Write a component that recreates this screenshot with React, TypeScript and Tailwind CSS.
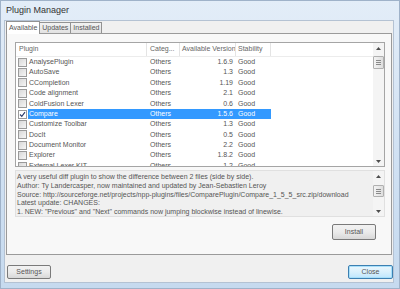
import React from "react";

const plugins: [string, string, string, string][] = [
  ["AnalysePlugin", "Others", "1.6.9", "Good"],
  ["AutoSave", "Others", "1.3", "Good"],
  ["CCompletion", "Others", "1.19", "Good"],
  ["Code alignment", "Others", "2.1", "Good"],
  ["ColdFusion Lexer", "Others", "0.6", "Good"],
  ["Compare", "Others", "1.5.6", "Good"],
  ["Customize Toolbar", "Others", "1.3", "Good"],
  ["DocIt", "Others", "0.5", "Good"],
  ["Document Monitor", "Others", "2.2", "Good"],
  ["Explorer", "Others", "1.8.2", "Good"],
  ["External Lexer KIT", "Others", "1.2", "Good"],
];

function Checkbox({ checked }: { checked?: boolean }) {
  return (
    <div
      className={
        "w-[9px] h-[9px] border border-[#9a9a9a] flex items-center justify-center " +
        (checked ? "bg-white" : "bg-gradient-to-br from-[#d8d8d8] to-[#f6f6f6]")
      }
    >
      {checked && (
        <svg width="7" height="7" viewBox="0 0 7 7">
          <path d="M1 3.5 L2.8 5.3 L6 1.2" stroke="#2a3a6a" strokeWidth="1.1" fill="none" />
        </svg>
      )}
    </div>
  );
}

function ScrollBar({ thumbTop, thumbH }: { thumbTop: number; thumbH: number }) {
  return (
    <div className="w-[11px] h-full relative bg-[#f4f4f4] flex flex-col items-center">
      <div className="h-[10px] flex items-center justify-center">
        <svg width="5" height="3" viewBox="0 0 5 3">
          <path d="M0 3 L2.5 0 L5 3 Z" fill="#4d4d4d" />
        </svg>
      </div>
      <div
        className="absolute left-0 w-[11px] border border-[#b0b0b0] rounded-[1px] bg-gradient-to-r from-[#f3f3f3] to-[#dedede] flex flex-col items-center justify-center gap-[1px]"
        style={{ top: thumbTop, height: thumbH }}
      >
        <div className="w-[5px] h-[1px] bg-[#8a8a8a]" />
        <div className="w-[5px] h-[1px] bg-[#8a8a8a]" />
        <div className="w-[5px] h-[1px] bg-[#8a8a8a]" />
      </div>
      <div className="flex-1" />
      <div className="h-[10px] flex items-center justify-center">
        <svg width="5" height="3" viewBox="0 0 5 3">
          <path d="M0 0 L2.5 3 L5 0 Z" fill="#4d4d4d" />
        </svg>
      </div>
    </div>
  );
}

export default function App() {
  const font = { fontFamily: '"Liberation Sans", Arial, sans-serif' };
  return (
    <div
      className="w-[400px] h-[289px] overflow-hidden relative bg-gradient-to-b from-[#e3edf8] via-[#d2e2f3] to-[#c6daef] border border-[#9fb2c9] text-[#555]"
      style={font}
    >
      {/* Title bar */}
      <div className="h-[19px] flex items-center pl-[5px] text-[9px] text-[#333]">
        Plugin Manager
      </div>
      {/* Client area */}
      <div className="ml-[3px] mr-[5px] h-[263px] bg-[#f0f0f0] border border-[#b4c2d3] flex flex-col text-[7px]">
        {/* Tabs */}
        <div className="flex h-[12px] pl-[1px] items-end relative z-10">
          <div className="h-[13px] px-[2px] border border-[#929292] border-b-0 bg-white flex items-center text-[#555] -mb-[1px]">
            Available
          </div>
          <div className="h-[11px] px-[2px] border border-[#929292] border-l-0 border-b-0 bg-gradient-to-b from-[#f2f2f2] to-[#e2e2e2] flex items-center text-[#555]">
            Updates
          </div>
          <div className="h-[11px] px-[2px] border border-[#929292] border-l-0 border-b-0 bg-gradient-to-b from-[#f2f2f2] to-[#e2e2e2] flex items-center text-[#555]">
            Installed
          </div>
        </div>
        {/* Panel */}
        <div className="ml-[1px] mr-[1px] h-[222px] border border-[#9a9a9a] bg-[#f8f8f8] flex flex-col pl-[8px] pr-[6px] pt-[8px]">
          {/* List */}
          <div className="h-[125px] border border-[#a5a5a5] bg-white flex">
            <div className="flex-1 flex flex-col overflow-hidden">
              <div className="h-[14px] flex items-center text-[#666] shrink-0 border-b border-[#ececec]">
                <div className="w-[131px] pl-[3px] h-full flex items-center border-r border-[#e4e4e4]">Plugin</div>
                <div className="w-[33px] pl-[3px] h-full flex items-center border-r border-[#e4e4e4] whitespace-nowrap">Categ...</div>
                <div className="w-[56px] pl-[2px] h-full flex items-center border-r border-[#e4e4e4] whitespace-nowrap overflow-hidden">Available Version</div>
                <div className="w-[35px] pl-[2px] h-full flex items-center border-r border-[#e4e4e4]">Stability</div>
              </div>
              {plugins.map(([name, cat, ver, stab], i) => {
                const sel = name === "Compare";
                return (
                  <div key={i} className="h-[10.4px] flex items-center shrink-0 text-[#555]">
                    <div className="w-[12px] pl-[2px] flex items-center">
                      <Checkbox checked={sel} />
                    </div>
                    <div
                      className={
                        "flex items-center h-full " + (sel ? "bg-[#3399ff] text-white" : "")
                      }
                    >
                      <div className="w-[119px] pl-[1px] whitespace-nowrap">{name}</div>
                      <div className="w-[33px] pl-[3px]">{cat}</div>
                      <div className="w-[56px] pr-[3px] text-right">{ver}</div>
                      <div className="w-[35px] pl-[2px]">{stab}</div>
                    </div>
                  </div>
                );
              })}
            </div>
            <ScrollBar thumbTop={13} thumbH={13} />
          </div>
          {/* Description */}
          <div className="mt-[3px] h-[47px] border border-[#e0e0e0] bg-[#f0f0f0] flex">
            <div className="flex-1 pl-[1px] pt-[2px] leading-[8.8px] text-[#555] whitespace-nowrap overflow-hidden">
              <div>A very useful diff plugin to show the difference between 2 files (side by side).</div>
              <div>Author: Ty Landercasper, now maintained and updated by Jean-Sebastien Leroy</div>
              <div>Source: http://sourceforge.net/projects/npp-plugins/files/ComparePlugin/Compare_1_5_5_src.zip/download</div>
              <div>Latest update: CHANGES:</div>
              <div>1. NEW: "Previous" and "Next" commands now jumping blockwise instead of linewise.</div>
            </div>
            <ScrollBar thumbTop={14} thumbH={12} />
          </div>
          {/* Install */}
          <div className="flex justify-end mt-[7px] pr-[9px]">
            <div className="w-[44px] h-[16px] border border-[#7a7a7a] rounded-[2px] bg-gradient-to-b from-[#f2f2f2] via-[#ebebeb] to-[#d8d8d8] flex items-center justify-center text-[#555]">
              Install
            </div>
          </div>
        </div>
        {/* Bottom buttons */}
        <div className="flex justify-between items-center mt-[10px] pl-[2px] pr-0">
          <div className="w-[44px] h-[14px] border border-[#7a7a7a] rounded-[2px] bg-gradient-to-b from-[#f2f2f2] via-[#ebebeb] to-[#d8d8d8] flex items-center justify-center text-[#555]">
            Settings
          </div>
          <div className="w-[45px] h-[14px] border border-[#3c7fb1] rounded-[2px] bg-gradient-to-b from-[#eaf6fd] via-[#d9f0fc] to-[#bee6fd] flex items-center justify-center text-[#555] shadow-[inset_0_0_0_1px_#a7dffa]">
            Close
          </div>
        </div>
      </div>
    </div>
  );
}
